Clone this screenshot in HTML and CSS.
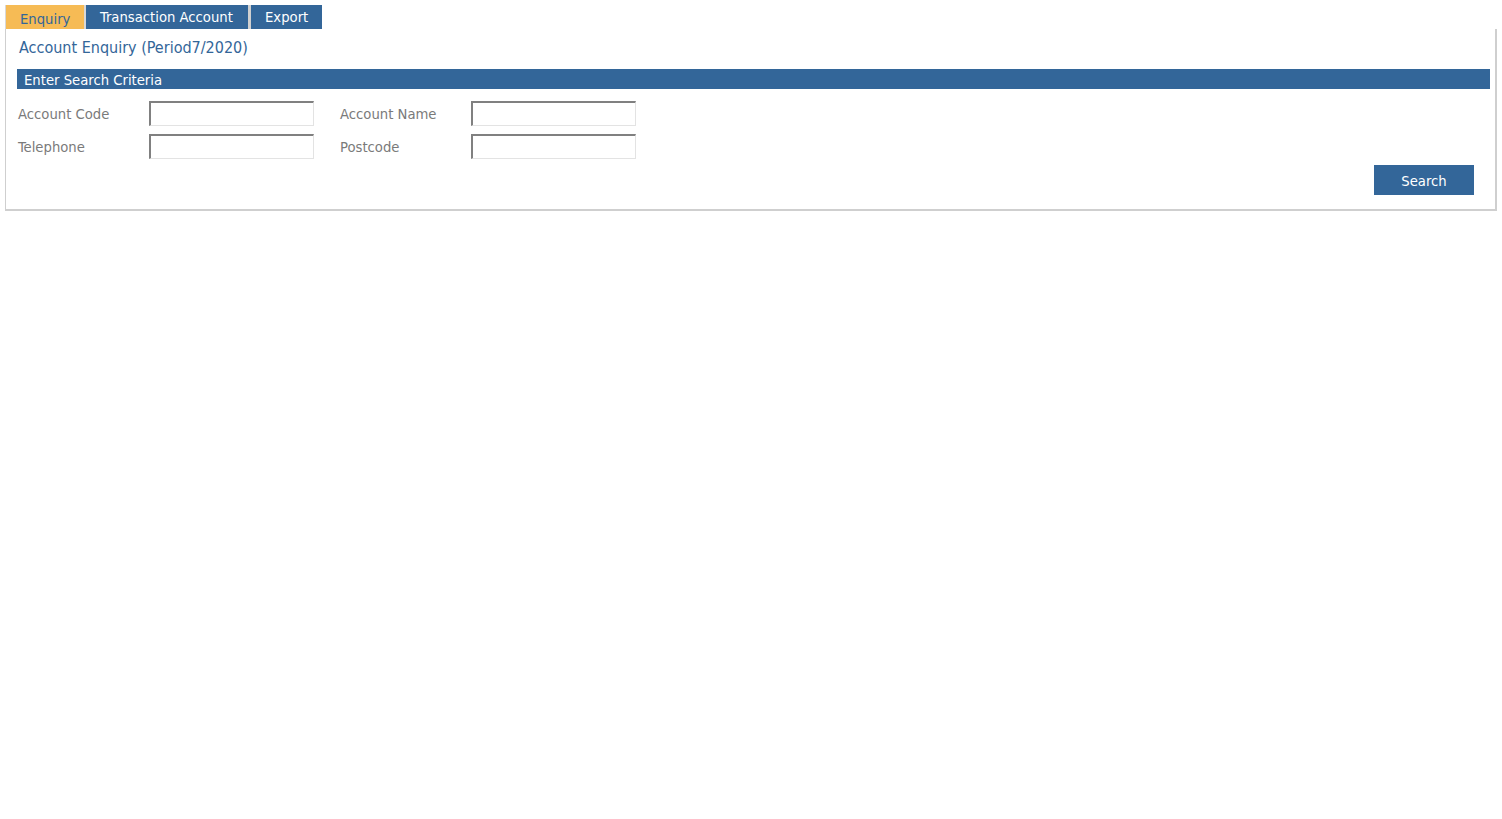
FILE: index.html
```html
<!DOCTYPE html>
<html>
<head>
<meta charset="utf-8">
<link rel="stylesheet" href="styles.css">
</head>
<body>
<div class="tabs">
  <div class="tab tab-active">Enquiry</div>
  <div class="tab">Transaction Account</div>
  <div class="tab">Export</div>
</div>
<div class="panel">
  <div class="title">Account Enquiry (Period7/2020)</div>
  <div class="bar">Enter Search Criteria</div>
  <div class="form">
    <label class="label">Account Code</label>
    <input class="field" type="text">
    <label class="label">Account Name</label>
    <input class="field" type="text">
    <label class="label">Telephone</label>
    <input class="field" type="text">
    <label class="label">Postcode</label>
    <input class="field" type="text">
  </div>
  <div class="actions">
    <button class="btn">Search</button>
  </div>
</div>
</body>
</html>
```
FILE: styles.css
```css
html, body {
  background: #fff;
}
body {
  margin: 5px;
  font-family: "DejaVu Sans Condensed", "DejaVu Sans", sans-serif;
  font-size: 14.7px;
}
.tabs {
  display: flex;
  height: 24px;
}
.tab {
  background: #336699;
  color: #fff;
  padding: 0 14px;
  line-height: 24px;
  border-right: 3px solid #d0d0d0;
  box-sizing: border-box;
  white-space: nowrap;
}
.tab-active {
  background: #f6bb55;
  color: #336699;
  line-height: 27px;
  border-left: 1px solid #d8d8d8;
  padding: 0 14px;
  width: 81px;
  border-right: 2px solid #d8d8d8;
}
.tab:nth-child(2) {
  width: 165px;
  padding: 0 14px;
}
.tab:nth-child(3) {
  width: 71px;
  border-right: none;
}
.panel {
  border: 1px solid #cfcfcf;
  border-top: none;
  border-width: 0 2px 2px 1px;
  height: 180px;
  box-sizing: content-box;
}
.title {
  color: #336699;
  font-size: 16px;
  padding: 9px 0 0 13px;
  height: 31px;
}
.bar {
  background: #336699;
  color: #fff;
  margin: 0 5px 0 11px;
  height: 20px;
  line-height: 21px;
  padding-left: 7px;
}
.form {
  display: grid;
  grid-template-columns: 131px 165px 26px 131px 165px;
  row-gap: 8px;
  margin: 12px 0 0 12px;
}
.form .label:nth-of-type(2n) {
  grid-column: 4;
}
.label {
  color: #7a7a7a;
  line-height: 25px;
}
.field {
  width: 165px;
  height: 25px;
  box-sizing: border-box;
  margin: 0;
  border-style: solid;
  border-width: 2px 1px 1px 2px;
  border-color: #808080 #e3e3e3 #e3e3e3 #808080;
  background: #fff;
}
.actions {
  display: flex;
  justify-content: flex-end;
  margin: 6px 21px 0 0;
}
.btn {
  width: 100px;
  height: 30px;
  background: #336699;
  color: #fff;
  border: none;
  font-family: inherit;
  font-size: 14.7px;
  padding: 0;
}
```
